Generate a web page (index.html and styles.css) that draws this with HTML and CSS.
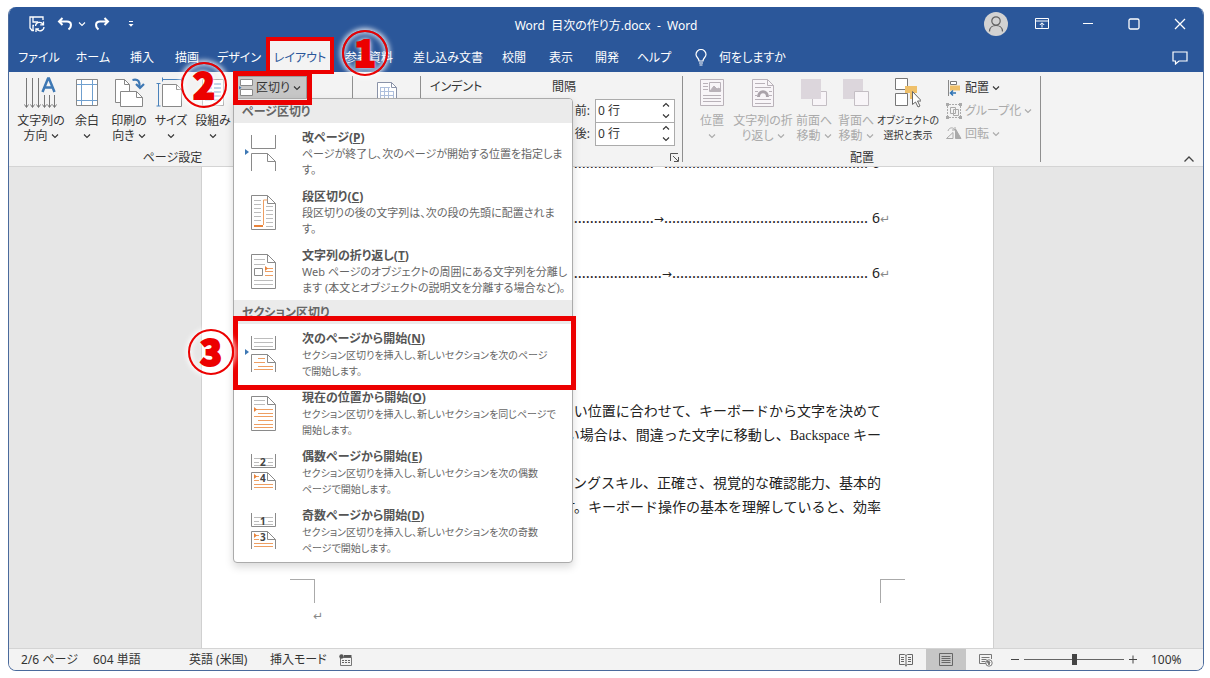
FILE: index.html
```html
<!DOCTYPE html>
<html lang="ja">
<head>
<meta charset="utf-8">
<title>Word 目次の作り方.docx - Word</title>
<link rel="stylesheet" href="styles.css">
</head>
<body>
<svg class="defs" aria-hidden="true">
  <symbol id="chev" viewBox="0 0 8 6"><path d="M1 1.5l3 3 3-3" fill="none" stroke="currentColor" stroke-width="1.1"/></symbol>
  <symbol id="chev-up" viewBox="0 0 8 6"><path d="M1 4.5l3-3 3 3" fill="none" stroke="currentColor" stroke-width="1.1"/></symbol>
</svg>
<div class="window">
  <header class="titlebar">
    <div class="quick">
      <button class="bare" aria-label="上書き保存"><svg width="16" height="16" viewBox="0 0 16 16" fill="none" stroke="#fff" stroke-width="1.3"><path d="M5 14.500H3L1 12V1h13v3M4 1v5h5M4 14.500V9.500h1"/><path d="M6.500 10a4 4 0 0 1 7.500-1.500M14.500 5.500v3.300h-3.300M15 11a4 4 0 0 1-7.500 1.800M7 16v-3.200h3"/></svg></button>
      <button class="bare undo" aria-label="元に戻す"><svg width="16" height="14" viewBox="0 0 16 14" fill="none" stroke="#fff" stroke-width="2"><path d="M5.500 1L2 4.500 5.500 8M2 4.500h8c5 0 5 5 1.500 8"/></svg></button>
      <button class="bare undo-more" aria-label="元に戻す一覧"><svg width="8" height="6"><use href="#chev"/></svg></button>
      <button class="bare redo" aria-label="やり直し"><svg width="16" height="14" viewBox="0 0 16 14" fill="none" stroke="#fff" stroke-width="2"><path d="M10.500 1L14 4.500 10.500 8M14 4.500H6c-5 0-5 5-1.500 8"/></svg></button>
      <button class="bare customize" aria-label="カスタマイズ"><svg width="6" height="6" viewBox="0 0 6 6"><path d="M1 .5h4" stroke="#fff"/><path d="M.5 3h5L3 5.800z" fill="#fff"/></svg></button>
    </div>
    <h1 class="doc-title">Word&nbsp; 目次の作り方.docx&nbsp; -&nbsp; Word</h1>
    <div class="controls">
      <button class="bare" aria-label="アカウント"><svg width="24" height="24" viewBox="0 0 24 24"><circle cx="12" cy="12" r="12" fill="#d2d2d2"/><g fill="none" stroke="#606060" stroke-width="1.2"><circle cx="12" cy="9" r="4.200"/><path d="M5.500 19.500c0-8 13-8 13 0"/></g></svg></button>
      <button class="bare" aria-label="リボンの表示オプション"><svg width="14" height="12" viewBox="0 0 14 12" fill="none" stroke="#fff"><path d="M.5.5h13v10H.5zM.5 3h13M7 9.500V5M4.800 7L7 4.800 9.200 7"/></svg></button>
      <button class="bare" aria-label="最小化"><svg width="12" height="12" viewBox="0 0 12 12"><path d="M1 5.500h10" stroke="#fff" stroke-width="1.200"/></svg></button>
      <button class="bare" aria-label="最大化"><svg width="12" height="12" viewBox="0 0 12 12"><rect x="1" y="1" width="10" height="10" rx="1.500" fill="none" stroke="#fff" stroke-width="1.300"/></svg></button>
      <button class="bare" aria-label="閉じる"><svg width="12" height="12" viewBox="0 0 12 12"><path d="M1 1l10 10M11 1L1 11" stroke="#fff" stroke-width="1.300"/></svg></button>
    </div>
  </header>

  <nav class="tabs">
    <div class="tablist" role="tablist">
      <button role="tab">ファイル</button><button role="tab">ホーム</button><button role="tab">挿入</button><button role="tab">描画</button><button role="tab">デザイン</button><button role="tab" class="active" aria-selected="true">レイアウト</button><button role="tab">参考資料</button><button role="tab">差し込み文書</button><button role="tab">校閲</button><button role="tab">表示</button><button role="tab">開発</button><button role="tab">ヘルプ</button>
    </div>
    <button class="tell-me"><svg width="12" height="17" viewBox="0 0 12 17" fill="none" stroke="#fff" stroke-width="1.200"><path d="M4 12C4 9 1 8.500 1 5.500a5 5 0 0 1 10 0C11 8.500 8 9 8 12zM4 14h4M4.500 16h3"/></svg><span>何をしますか</span></button>
    <button class="bare comments" aria-label="コメント"><svg width="16" height="14" viewBox="0 0 16 14" fill="none" stroke="#fff" stroke-width="1.200"><path d="M1 1h14v9H7l-3.500 3v-3H1z"/></svg></button>
  </nav>

  <section class="ribbon">
    <div class="group page-setup">
      <div class="group-body">
        <button class="big w50"><svg width="34" height="34" viewBox="0 0 34 34" fill="none" stroke="#777"><path d="M2.500 2v29M8.500 2v29M14.500 2v29M20.500 19v12M25.500 19v12M30.500 19v12M.5 28.500l2 3 2-3M6.500 28.500l2 3 2-3M12.500 28.500l2 3 2-3M18.500 28.500l2 3 2-3M23.500 28.500l2 3 2-3M28.500 28.500l2 3 2-3"/><path d="M18.500 16L24 2.500h1L30.500 16M20.500 11.500h8" stroke="#3e78b4" stroke-width="2.500"/></svg><span>文字列の<br>方向 <svg class="ch"><use href="#chev"/></svg></span></button>
        <button class="big w42"><svg width="24" height="34" viewBox="0 0 24 34" fill="none"><path d="M1.500 3.500h21v26h-21z" fill="#fff" stroke="#888"/><path d="M6.500 4v25M17.500 4v25M2 8.500h20M2 24.500h20" stroke="#6f9fce"/></svg><span>余白<br><svg class="ch"><use href="#chev"/></svg></span></button>
        <button class="big w42"><svg width="32" height="34" viewBox="0 0 32 34"><g fill="#fff" stroke="#888"><path d="M2.500 3.500h9l5 5v18h-14z"/><path d="M11.500 3.500v5h5" fill="none"/><path d="M7.500 15.500h16l6 6v9h-22z"/><path d="M23.500 15.500v6h6" fill="none"/></g><path d="M19.500 4c6-1.500 7.500 2 7 7M23 8l4 4 4-4" fill="none" stroke="#3e78b4" stroke-width="2.200"/></svg><span>印刷の<br>向き <svg class="ch"><use href="#chev"/></svg></span></button>
        <button class="big w42"><svg width="32" height="34" viewBox="0 0 32 34" fill="none"><path d="M7.500 8.500h14l5 5v17h-19z" fill="#fff" stroke="#888"/><path d="M21.500 8.500v5h5" stroke="#888"/><path d="M3.500 7v23M1.500 7.500h4M1.500 30h4M7.500 3.500h19M7.500 1.500v4M26.500 1.500v4" stroke="#4a82bb"/></svg><span>サイズ<br><svg class="ch"><use href="#chev"/></svg></span></button>
        <button class="big w42"><svg width="24" height="34" viewBox="0 0 24 34" fill="none"><path d="M1.500 3.500h21v26h-21z" fill="#fff" stroke="#aaa"/><path d="M4 8h7M4 12h7M4 16h7M4 20h7M4 24h7M13 8h7M13 12h7M13 16h7M13 20h7M13 24h7" stroke="#7fa8d0"/></svg><span>段組み<br><svg class="ch"><use href="#chev"/></svg></span></button>
        <div class="breaks">
          <button class="breaks-btn" aria-expanded="true"><svg width="14" height="18" viewBox="0 0 14 18"><path d="M1.500.5h12v6h-12zM1.500 10.500h12v6h-12z" fill="#fff" stroke="#8a8a8a"/><path d="M0 7l2.500 1.800L0 10.500z" fill="#3e78b4"/></svg><span>区切り</span><svg class="ch"><use href="#chev"/></svg></button>
          <div class="menu" role="menu">
            <h2>ページ区切り</h2>
            <button role="menuitem" class="item"><svg class="mi" viewBox="0 0 32 36"><path d="M0 14v6l4-3z" fill="#3e78b4"/><path d="M6.500 0v13.500h24V0M6.500 36V18.500h16l8 8V36M22.500 18.500v8h8" class="pg"/></svg><span><b>改ページ(<u>P</u>)</b>ページが終了し、次のページが開始する位置を指定しま<br>す。</span></button>
            <button role="menuitem" class="item"><svg class="mi" viewBox="0 0 32 36"><path d="M6.500 1.500h16l8 8v26h-24zM22.500 1.500v8h8" class="pg"/><path d="M9 6.500h7M9 10.500h7M9 14.500h7M9 18.500h7M9 22.500h7M9 26.500h7M21 12.500h7M21 16.500h7M21 20.500h7M21 24.500h7M21 28.500h7M21 32.500h7" class="ln"/><path d="M18.500 31V6h4" class="or"/><path d="M9 32h9" class="or2"/></svg><span><b>段区切り(<u>C</u>)</b>段区切りの後の文字列は、次の段の先頭に配置されま<br>す。</span></button>
            <button role="menuitem" class="item"><svg class="mi" viewBox="0 0 32 36"><path d="M6.500 1.500h16l8 8v26h-24zM22.500 1.500v8h8M9.500 15.500h8v7h-8z" class="pg"/><path d="M9 6.500h11M9 11.500h11M9 27.500h19M9 31.500h19" class="ln"/><path d="M20 15.500h8M20 18.500h4M24 18.500h4M20 22.500h8" class="or"/><path d="M20 13v5l3-2.500z" fill="#e8833a"/></svg><span><b>文字列の折り返し(<u>T</u>)</b>Web ページのオブジェクトの周囲にある文字列を分離し<br>ます (本文とオブジェクトの説明文を分離する場合など)。</span></button>
            <h2>セクション区切り</h2>
            <button role="menuitem" class="item section"><svg class="mi" viewBox="0 0 32 36"><path d="M0 13v6l4-3z" fill="#3e78b4"/><path d="M6.500 0v13.500h24V0M6.500 36V18.500h16l8 8V36M22.500 18.500v8h8" class="pg"/><path d="M9 2.500h19M9 6.500h19M9 10.500h19" class="ln"/><path d="M13 22.500h7M9 26.500h11M13 30.500h15M9 33.500h19" class="or"/></svg><span><b>次のページから開始(<u>N</u>)</b>セクション区切りを挿入し、新しいセクションを次のページ<br>で開始します。</span></button>
            <button role="menuitem" class="item section"><svg class="mi" viewBox="0 0 32 36"><path d="M6.500 1.500h16l8 8v26h-24zM22.500 1.500v8h8" class="pg"/><path d="M9 5.500h11M9 9.500h11" class="ln"/><path d="M10 14.500h18M13 18.500h15M9 21.500h19M13 25.500h15M9 29.500h19M9 32.500h19" class="or"/><path d="M9 12v5l3-2.500z" fill="#e8833a"/></svg><span><b>現在の位置から開始(<u>O</u>)</b>セクション区切りを挿入し、新しいセクションを同じページで<br>開始します。</span></button>
            <button role="menuitem" class="item section"><svg class="mi" viewBox="0 0 32 36"><path d="M6.500 0v13.500h24V0M6.500 36V18.500h16l8 8V36M22.500 18.500v8h8" class="pg"/><path d="M9 4.500h19M9 8.500h5M23 8.500h5M9 11.500h19" class="ln"/><path d="M10 22.500h4M9 26.500h5M9 30.500h19M9 33.500h19" class="or"/><path d="M9 20v5l3-2.500z" fill="#e8833a"/><text x="15" y="12">2</text><text x="15" y="28">4</text></svg><span><b>偶数ページから開始(<u>E</u>)</b>セクション区切りを挿入し、新しいセクションを次の偶数<br>ページで開始します。</span></button>
            <button role="menuitem" class="item section"><svg class="mi" viewBox="0 0 32 36"><path d="M6.500 0v13.500h24V0M6.500 36V18.500h16l8 8V36M22.500 18.500v8h8" class="pg"/><path d="M9 4.500h19M9 8.500h5M23 8.500h5M9 11.500h19" class="ln"/><path d="M10 22.500h4M9 26.500h5M9 30.500h19M9 33.500h19" class="or"/><path d="M9 20v5l3-2.500z" fill="#e8833a"/><text x="15" y="12">1</text><text x="15" y="28">3</text></svg><span><b>奇数ページから開始(<u>D</u>)</b>セクション区切りを挿入し、新しいセクションを次の奇数<br>ページで開始します。</span></button>
          </div>
        </div>
      </div>
      <div class="group-label">ページ設定</div>
    </div>
    <div class="group paper">
      <svg width="22" height="30" viewBox="0 0 22 30"><path d="M1.500 1.500h14l5 5v22h-19z" fill="#fff" stroke="#8a93a8"/><path d="M15.500 1.500v5h5" fill="none" stroke="#8a93a8"/><path d="M4 6.500h10M4 10.500h14M4 14.500h14M4 18.500h14M4.500 6v18M8.500 6v18M12.500 6v18M17.500 10v14" stroke="#aebfdc" fill="none"/></svg>
    </div>
    <div class="group paragraph">
      <div class="para-heads"><span>インデント</span><span class="spacing">間隔</span></div>
      <div class="field"><label for="before">前:</label><div class="spin"><input id="before" value="0 行"><span class="arrows"><svg class="ch"><use href="#chev-up"/></svg><svg class="ch"><use href="#chev"/></svg></span></div></div>
      <div class="field"><label for="after">後:</label><div class="spin"><input id="after" value="0 行"><span class="arrows"><svg class="ch"><use href="#chev-up"/></svg><svg class="ch"><use href="#chev"/></svg></span></div></div>
      <button class="bare launcher" aria-label="段落の設定"><svg width="9" height="9" viewBox="0 0 9 9" fill="none" stroke="#555"><path d="M.5 8V.5H8M3 3l5 5M8.500 4v4.500H4"/></svg></button>
    </div>
    <div class="group arrange">
      <div class="group-body">
        <button class="big w42" disabled><svg width="24" height="34" viewBox="0 0 24 34" fill="none" stroke="#b9b2b9"><path d="M.5 3.500h23v26H.5z" fill="#f8f5f8"/><path d="M3 7.500h5M3 10.500h5M3 13.500h5M3 19.500h18M3 22.500h18M3 25.500h18M9.500 6.500h11v9h-11z"/><path d="M10 15l4-5 3 3 2-1 2 3z" fill="#b9b2b9"/></svg><span>位置<br><svg class="ch"><use href="#chev"/></svg></span></button>
        <button class="big w60" disabled><svg width="24" height="34" viewBox="0 0 24 34" fill="none" stroke="#b9b2b9"><path d="M1.500 3.500h15l6 6v21h-21z" fill="#f8f5f8"/><path d="M16.500 3.500v6h6M4 7.500h10M4 11.500h16M4 15.500h3M18 15.500h3M4 19.500h2M18 19.500h3M4 23.500h16M4 27.500h16"/><path d="M7.500 21c0-7 9-7 9 0" stroke="#aaa3aa" stroke-width="3"/></svg><span>文字列の折<br>り返し <svg class="ch"><use href="#chev"/></svg></span></button>
        <button class="big w42" disabled><svg width="28" height="34" viewBox="0 0 28 34"><path d="M12.500 15.500h14v14h-14z" fill="#f8f5f8" stroke="#c4bec4"/><path d="M1 3h20v20H1z" fill="#dcd6dc"/></svg><span>前面へ<br>移動 <svg class="ch"><use href="#chev"/></svg></span></button>
        <button class="big w42" disabled><svg width="28" height="34" viewBox="0 0 28 34"><path d="M1 3h20v20H1z" fill="#dcd6dc"/><path d="M12.500 15.500h14v14h-14z" fill="#f8f5f8" stroke="#c4bec4"/></svg><span>背面へ<br>移動 <svg class="ch"><use href="#chev"/></svg></span></button>
        <button class="big w62"><svg width="26" height="34" viewBox="0 0 26 34"><path d="M.5 2.500h12v11H.5zM.5 17.500h12v12H.5z" fill="#fff" stroke="#777"/><path d="M10 10h12v7h-4v6h-3v-6h-5z" fill="#efc06a"/><path d="M17.500 15.500v13l3-2.500 2.500 5 2-1-2.500-5h4z" fill="#fff" stroke="#666"/></svg><span>オブジェクトの<br>選択と表示</span></button>
        <div class="stack">
          <button class="small"><svg width="16" height="16" viewBox="0 0 16 16"><path d="M2.500 0v16" stroke="#888"/><path d="M4.500 1.500h6v3h-6z" fill="#fff" stroke="#777"/><path d="M4 5.500h10v5H4z" fill="#efc06a"/><path d="M10 13H4.500M7 10.500L4.500 13 7 15.500" fill="none" stroke="#2f74b5" stroke-width="1.500"/></svg><span>配置</span><svg class="ch"><use href="#chev"/></svg></button>
          <button class="small" disabled><svg width="16" height="16" viewBox="0 0 16 16" fill="none" stroke="#aaa"><path d="M3 1.500h10M3 14.500h10M1.500 3v10M14.500 3v10" stroke-dasharray="2 1"/><path d="M4.500 4.500h5v6h-5zM7.500 6.500h5v6h-5z"/><path d="M0 0h3v3H0zM13 0h3v3h-3zM0 13h3v3H0zM13 13h3v3h-3z" fill="#aaa" stroke="none"/></svg><span>グループ化</span><svg class="ch"><use href="#chev"/></svg></button>
          <button class="small" disabled><svg width="16" height="16" viewBox="0 0 16 16" fill="none" stroke="#aaa"><path d="M.5 12.500L7 6.500v6zM2 5c1-4 6-4 6.500-1M9 1v3H6"/><path d="M9.500 3v9.500H15z" fill="#aaa"/></svg><span>回転</span><svg class="ch"><use href="#chev"/></svg></button>
        </div>
      </div>
      <div class="group-label">配置</div>
    </div>
    <button class="bare collapse" aria-label="リボンを折りたたむ"><svg width="10" height="6" viewBox="0 0 10 6"><path d="M.5 5.500L5 1l4.500 4.500" fill="none" stroke="#444" stroke-width="1.300"/></svg></button>
  </section>

  <main class="workspace">
    <article class="page">
      <div class="toc">
        <p>.....................<i class="tab">→</i>................................................... <span>6</span><i>↵</i></p>
        <p>.....................<i class="tab">→</i>................................................... <span>6</span><i>↵</i></p>
        <p>.......................<i class="tab">→</i>................................................. <span>6</span><i>↵</i></p>
      </div>
      <div class="prose">
        <p>い位置に合わせて、キーボードから文字を決めて<br>い場合は、間違った文字に移動し、Backspace キー</p>
        <p>ピングスキル、正確さ、視覚的な確認能力、基本的<br>す。キーボード操作の基本を理解していると、効率</p>
      </div>
      <div class="marks"><span class="mark left"></span><span class="mark right"></span></div>
      <p class="last">↵</p>
    </article>
  </main>

  <footer class="status">
    <span class="pages">2/6 ページ</span><span class="words">604 単語</span><span class="lang">英語 (米国)</span><span class="mode">挿入モード</span>
    <svg width="13" height="12" viewBox="0 0 13 12"><path d="M1.500 3.500h11v8h-11z" fill="none" stroke="#777"/><path d="M5 1h7.500v2.500H5z" fill="#555"/><circle cx="2.500" cy="2.500" r="2.200" fill="#555"/><path d="M3 6.500h8M3 8.500h8" stroke="#666" stroke-dasharray="2 1"/></svg>
    <div class="views">
      <button class="view" aria-label="閲覧モード"><svg width="14" height="14" viewBox="0 0 14 14" fill="none" stroke="#666"><path d="M.5 1.500h5L7 2.500l1.500-1h5v10h-5L7 12.500l-1.500-1h-5zM7 2.500v11M2 4.500h3M2 6.500h3M2 8.500h3M9 4.500h3M9 6.500h3M9 8.500h3"/></svg></button>
      <button class="view on" aria-label="印刷レイアウト"><svg width="14" height="14" viewBox="0 0 14 14" fill="none" stroke="#666"><path d="M.5.500h13v12H.5zM2.500 3.500h9M2.500 5.500h9M2.500 7.500h9M2.500 9.500h9"/></svg></button>
      <button class="view" aria-label="Web レイアウト"><svg width="14" height="14" viewBox="0 0 14 14" fill="none" stroke="#777"><path d="M7 10.500H.5v-9h12V6M2.500 4.500h8M2.500 6.500h5M2.500 8.500h4"/><circle cx="10" cy="10" r="3.200" fill="#fff"/><path d="M8 8l3 1-1 3z" fill="#777"/></svg></button>
    </div>
    <div class="zoom">
      <button class="bare" aria-label="縮小"><svg width="10" height="10" viewBox="0 0 10 10"><path d="M1 4.500h8" stroke="#444"/></svg></button>
      <input type="range" min="0" max="100" value="50" aria-label="ズーム">
      <button class="bare" aria-label="拡大"><svg width="10" height="10" viewBox="0 0 10 10"><path d="M1 4.500h8M5 .5v8" stroke="#444"/></svg></button>
    </div>
    <span class="percent">100%</span>
  </footer>
</div>
<div class="callout-box box-tab"></div>
<div class="callout-box box-breaks"></div>
<div class="callout-box box-item"></div>
<div class="callout-num num-1">1</div>
<div class="callout-num num-2">2</div>
<div class="callout-num num-3">3</div>
</body>
</html>
```
FILE: styles.css
```css
* { box-sizing: border-box; }
body {
  margin: 0;
  padding: 7px 6px 7px 8px;
  height: 100vh;
  background: #fff;
  position: relative;
  overflow: hidden;
  color: #333;
  font: 12px/16px "Noto Sans", "Noto Sans CJK JP", sans-serif;
  font-feature-settings: "palt";
}
button, input { font: inherit; color: inherit; font-feature-settings: inherit; }
button { border: 0; padding: 0; background: none; white-space: nowrap; }
h1, h2, p { margin: 0; font-weight: 400; }
svg { display: block; flex: none; }
.defs { position: absolute; width: 0; height: 0; }
.bare { display: flex; align-items: center; justify-content: center; }
.ch { display: inline-block; width: 8px; height: 6px; vertical-align: 1px; }

.window {
  height: 100%;
  display: flex;
  flex-direction: column;
  border: 1px solid #4a6a9c;
  border-top: 0;
  border-radius: 8px;
  overflow: hidden;
}
.titlebar {
  display: grid;
  grid-template-columns: 1fr auto 1fr;
  background: #2b579a;
  color: #fff;
  height: 33px;
}
.quick { display: flex; align-items: center; padding-left: 20px; }
.undo { margin-left: 12px; }
.undo-more { margin-left: 5px; }
.redo { margin-left: 8px; }
.customize { margin-left: 18px; }
.doc-title { font-size: 12px; line-height: 16px; padding-top: 11px; }
.controls { display: flex; justify-content: flex-end; align-items: center; }
.controls button { width: 46px; height: 32px; }

.tabs { display: flex; background: #2b579a; color: #fff; height: 32px; padding-left: 3px; }
.tablist { display: grid; grid-template-columns: 54px 54px 44px 46px 58px 64px 74px 84px 48px 46px 46px 48px; }
.tablist button { padding-top: 4px; }
.tablist .active { background: #f3f3f3; color: #2b579a; }
.tell-me { display: flex; align-items: center; gap: 12px; margin-left: 17px; padding-top: 3px; }
.comments { margin-left: auto; margin-right: 15px; padding-top: 3px; }

.ribbon {
  position: relative;
  z-index: 2;
  display: flex;
  background: #f3f3f3;
  height: 95px;
  border-bottom: 1px solid #d4d4d4;
}
.group {
  position: relative;
  padding-top: 4px;
  display: flex;
  flex-direction: column;
  justify-content: space-between;
  background: linear-gradient(#8f8f8f, #8f8f8f) right center / 1px 86px no-repeat;
}
.group-body { display: flex; align-items: flex-start; }
.group-label { text-align: center; }
.page-setup { width: 344px; padding-left: 7px; z-index: 3; }
.page-setup .group-label { padding-right: 24px; }
.big { display: flex; flex-direction: column; align-items: center; line-height: 15px; }
.big span { padding-top: 3px; }
.w42 { width: 42px; }
.w50 { width: 50px; }
.w60 { width: 60px; }
.w62 { width: 62px; font-size: 10px; }
button:disabled { color: #aaa; }

.breaks { position: relative; padding-left: 1px; }
.breaks-btn {
  display: flex;
  align-items: center;
  gap: 3px;
  width: 72px;
  height: 23px;
  padding-left: 3px;
  background: #c6c6c6;
  border: 1px solid #9b9b9b;
}
.menu {
  position: absolute;
  left: -1px;
  top: 22px;
  width: 340px;
  background: #fff;
  border: 1px solid #ababab;
  border-radius: 4px;
  box-shadow: 0 4px 8px rgba(0, 0, 0, .15);
  overflow: hidden;
  padding-bottom: 2px;
}
.menu h2 {
  height: 24px;
  background: #ebebeb;
  color: #666;
  font-size: 12px;
  font-weight: 700;
  line-height: 26px;
  padding-left: 8px;
}
.menu .item {
  display: flex;
  gap: 25px;
  width: 100%;
  height: 59px;
  padding: 7px 0 0 11px;
  text-align: left;
  color: #666;
  font-size: 11px;
  line-height: 16px;
}
.menu .section { font-size: 10px; }
.item b { display: block; font-size: 12px; color: #555; }
.mi { width: 32px; height: 36px; margin-top: 5px; }
.mi text { font: 700 10px "Noto Sans", sans-serif; fill: #444; }
.pg { fill: none; stroke: #8a8a8a; }
.ln { fill: none; stroke: #bcbcbc; }
.or { fill: none; stroke: #ee9e62; }
.or2 { fill: none; stroke: #e8833a; stroke-width: 2; }

.paper { width: 68px; align-items: center; justify-content: flex-start; padding-top: 9px; }
.paragraph { width: 262px; justify-content: flex-start; }
.para-heads { display: flex; justify-content: space-between; padding: 3px 107px 4px 9px; }
.field { display: flex; align-items: center; justify-content: flex-end; gap: 5px; height: 23px; padding-right: 8px; }
.spin { display: flex; align-items: center; width: 80px; height: 24px; border: 1px solid #ababab; background: #fff; }
.spin input { flex: 1; min-width: 0; border: 0; padding: 0 0 0 2px; background: none; }
.arrows { display: flex; flex-direction: column; gap: 5px; padding-right: 4px; }
.launcher { position: absolute; right: 4px; bottom: 4px; }

.arrange { width: 358px; padding-left: 8px; }
.arrange .group-label { padding-right: 8px; }
.stack { display: flex; flex-direction: column; padding-left: 7px; }
.small { display: flex; align-items: center; gap: 3px; height: 23px; }
.collapse { margin: auto 9px 4px auto; }

.workspace {
  flex: 1;
  min-height: 0;
  overflow: hidden;
  background: #e6e6e6;
  display: flex;
  justify-content: center;
  padding-right: 17px;
}
.page { width: 793px; background: #fff; border: 1px solid #d0d0d0; border-width: 0 1px; color: #222; }
.toc { margin-top: -32px; padding-right: 103px; text-align: right; white-space: nowrap; }
.toc p { height: 55px; font: 16px/55px "Liberation Serif", serif; }
.toc span { font: 14px "Noto Sans", sans-serif; }
.toc i, .last { font: 12px "DejaVu Sans", sans-serif; color: #888; }
.toc .tab { color: #222; }
.prose {
  margin-top: 100px;
  padding-right: 112px;
  text-align: right;
  white-space: nowrap;
  font: 300 14px/24px "Liberation Serif", "Noto Sans CJK JP", serif;
  font-feature-settings: normal;
}
.prose p + p { margin-top: 24px; }
.marks { display: flex; justify-content: space-between; padding: 59px 88px 0; }
.mark { width: 25px; height: 24px; border: 0 solid #aaa; border-top-width: 1px; }
.mark.left { border-right-width: 1px; }
.mark.right { border-left-width: 1px; }
.last { padding: 6px 0 0 111px; }

.status { display: flex; align-items: center; height: 22px; background: #f3f3f3; border-top: 1px solid #d4d4d4; padding: 0 19px 0 12px; }
.pages { width: 72px; }
.words { width: 96px; }
.lang { width: 81px; }
.mode { width: 69px; }
.views { display: flex; margin-left: auto; align-self: stretch; }
.view { width: 40px; display: flex; align-items: center; justify-content: center; }
.view.on { background: #c6c6c6; }
.zoom { display: flex; align-items: center; gap: 4px; margin-left: 4px; }
.zoom input { appearance: none; width: 100px; height: 12px; margin: 0; background: linear-gradient(#666, #666) center / 100% 1px no-repeat; }
.zoom input::-webkit-slider-thumb { appearance: none; width: 5px; height: 11px; background: #444; }
.percent { width: 33px; margin-left: 13px; }

.callout-box { position: absolute; z-index: 5; border: 5px solid #ec0000; pointer-events: none; }
.box-tab { left: 266px; top: 37px; width: 68px; height: 37px; border-width: 4px; }
.box-breaks { left: 233px; top: 71px; width: 79px; height: 34px; }
.box-item { left: 233px; top: 316px; width: 343px; height: 74px; }
.callout-num {
  position: absolute;
  z-index: 6;
  width: 46px;
  height: 46px;
  border: 2px solid #ec0000;
  border-radius: 50%;
  color: #ec0000;
  font: 900 36px/38px "Noto Sans CJK JP", sans-serif;
  -webkit-text-stroke: 2px #ec0000;
  text-align: center;
  text-shadow: 0 0 4px #fff, 0 0 6px #fff;
  box-shadow: 0 0 5px 2px rgba(255, 255, 255, .8), inset 0 0 5px 2px rgba(255, 255, 255, .7);
}
.num-1 { left: 342px; top: 30px; }
.num-2 { left: 181px; top: 62px; }
.num-3 { left: 188px; top: 329px; }
```
